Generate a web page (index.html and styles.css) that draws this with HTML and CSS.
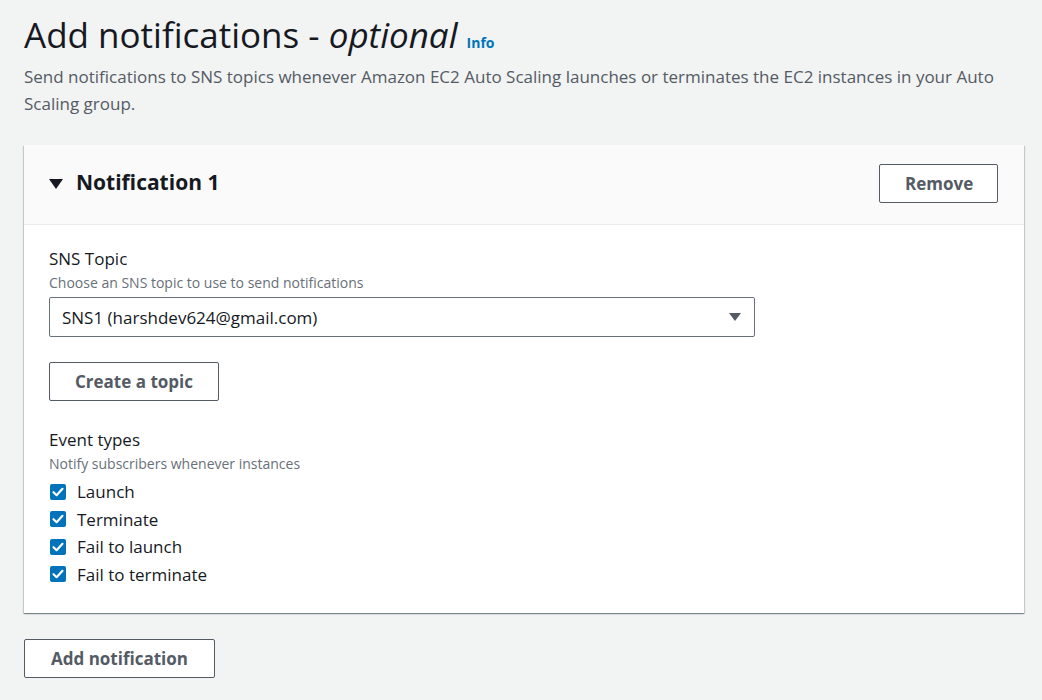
FILE: index.html
```html
<!DOCTYPE html>
<html>
<head>
<meta charset="utf-8">
<link rel="stylesheet" href="styles.css">
</head>
<body>
<div class="page">
  <div class="header">
    <h1 class="title">Add notifications - <em>optional</em> <a class="info">Info</a></h1>
    <p class="desc">Send notifications to SNS topics whenever Amazon EC2 Auto Scaling launches or terminates the EC2 instances in your Auto Scaling group.</p>
  </div>
  <div class="card">
    <div class="card-head">
      <div class="card-title"><span class="caret-down"></span>Notification 1</div>
      <button class="btn">Remove</button>
    </div>
    <div class="card-body">
      <div class="field">
        <div class="label">SNS Topic</div>
        <div class="hint">Choose an SNS topic to use to send notifications</div>
        <div class="select"><span>SNS1 (harshdev624@gmail.com)</span><span class="select-caret"></span></div>
      </div>
      <button class="btn btn-create">Create a topic</button>
      <div class="field">
        <div class="label">Event types</div>
        <div class="hint">Notify subscribers whenever instances</div>
        <div class="checks">
          <label class="check"><span class="box"><svg viewBox="0 0 16 16" width="16" height="16"><path d="M3.5 8.2 L6.6 11.2 L12.5 4.8" fill="none" stroke="#fff" stroke-width="2.2" stroke-linecap="round" stroke-linejoin="round"/></svg></span>Launch</label>
          <label class="check"><span class="box"><svg viewBox="0 0 16 16" width="16" height="16"><path d="M3.5 8.2 L6.6 11.2 L12.5 4.8" fill="none" stroke="#fff" stroke-width="2.2" stroke-linecap="round" stroke-linejoin="round"/></svg></span>Terminate</label>
          <label class="check"><span class="box"><svg viewBox="0 0 16 16" width="16" height="16"><path d="M3.5 8.2 L6.6 11.2 L12.5 4.8" fill="none" stroke="#fff" stroke-width="2.2" stroke-linecap="round" stroke-linejoin="round"/></svg></span>Fail to launch</label>
          <label class="check"><span class="box"><svg viewBox="0 0 16 16" width="16" height="16"><path d="M3.5 8.2 L6.6 11.2 L12.5 4.8" fill="none" stroke="#fff" stroke-width="2.2" stroke-linecap="round" stroke-linejoin="round"/></svg></span>Fail to terminate</label>
        </div>
      </div>
    </div>
  </div>
  <button class="btn btn-add">Add notification</button>
</div>
</body>
</html>
```

FILE: styles.css
```css
html, body {
  margin: 0;
  padding: 0;
  background: #f2f3f3;
}
body {
  font-family: "Open Sans", "Noto Sans", sans-serif;
  color: #16191f;
}
.page {
  padding: 12px 18px 0 24px;
}
.title {
  margin: 0;
  font-size: 35px;
  font-weight: 400;
  line-height: 46px;
  color: #16191f;
}
.title em {
  font-style: italic;
}
.info {
  font-size: 14px;
  font-weight: 700;
  color: #0073bb;
  vertical-align: baseline;
}
.desc {
  margin: -3px 0 0;
  font-size: 17px;
  line-height: 27px;
  color: #545b64;
}
.card {
  margin-top: 28px;
  background: #fff;
  box-shadow: 0 1px 1px 0 rgba(0, 28, 36, 0.3), 1px 1px 1px 0 rgba(0, 28, 36, 0.15), -1px 1px 1px 0 rgba(0, 28, 36, 0.15);
}
.card-head {
  display: flex;
  align-items: center;
  justify-content: space-between;
  height: 79px;
  padding: 0 26px 0 25px;
  background: #fafafa;
  border-bottom: 1px solid #eaeded;
}
.card-title {
  display: flex;
  align-items: center;
  font-size: 21px;
  font-weight: 700;
  margin-top: -6px;
}
.caret-down {
  width: 0;
  height: 0;
  border-left: 7px solid transparent;
  border-right: 7px solid transparent;
  border-top: 10px solid #16191f;
  margin: 4px 13px 0 0;
}
.btn {
  font-family: inherit;
  font-size: 17px;
  font-weight: 700;
  color: #545b64;
  background: #fff;
  border: 1px solid #545b64;
  border-radius: 2px;
  height: 39px;
  padding: 0 25px;
  cursor: pointer;
}
.card-head .btn {
  width: 119px;
  margin-top: -2px;
}
.card-body {
  padding: 22px 25px 25px;
}
.label {
  font-size: 17px;
  line-height: 24px;
}
.hint {
  font-size: 14px;
  line-height: 24px;
  color: #687078;
}
.select {
  display: flex;
  align-items: center;
  justify-content: space-between;
  width: 706px;
  height: 40px;
  margin-top: 2px;
  box-sizing: border-box;
  border: 1px solid #687078;
  border-radius: 2px;
  padding: 0 13px 0 12px;
  font-size: 17px;
}
.select-caret {
  width: 0;
  height: 0;
  border-left: 6px solid transparent;
  border-right: 6px solid transparent;
  border-top: 8px solid #545b64;
}
.btn-create {
  display: block;
  margin: 25px 0 27px;
  width: 170px;
  padding: 0;
}
.checks {
  display: flex;
  flex-direction: column;
  margin-top: 2px;
}
.check {
  display: flex;
  align-items: center;
  height: 27.5px;
  font-size: 17px;
}
.box {
  width: 16px;
  height: 16px;
  border-radius: 2px;
  background: #0073bb;
  margin: 0 11px 0 1px;
  display: flex;
}
.btn-add {
  margin-top: 26px;
  width: 191px;
  padding: 0;
}
```
